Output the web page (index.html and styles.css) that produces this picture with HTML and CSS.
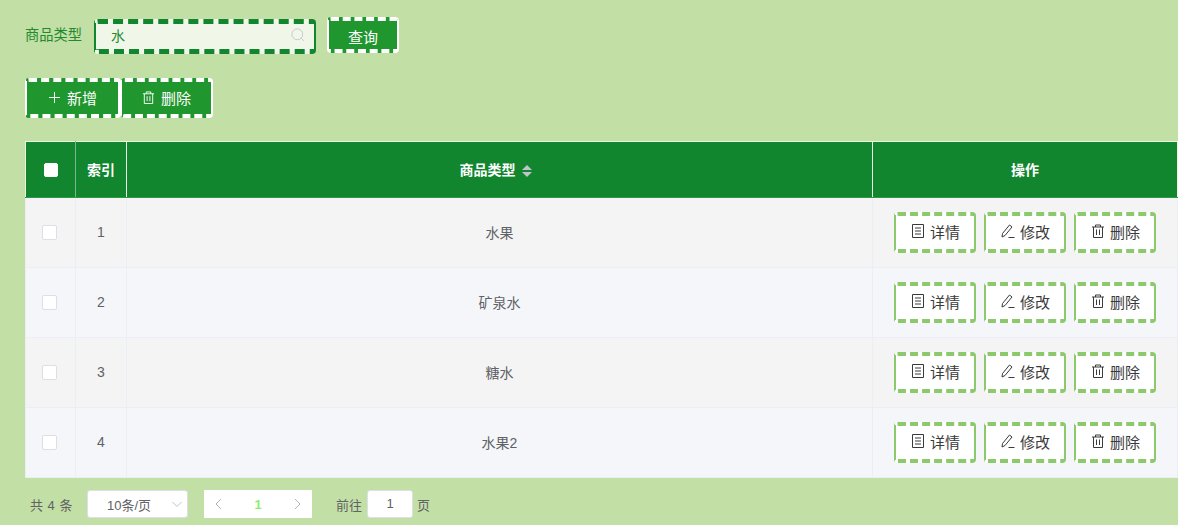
FILE: index.html
```html
<!DOCTYPE html>
<html lang="en">
<head>
    <meta charset="UTF-8">
    <title>商品类型</title>
    <link rel="stylesheet" href="styles.css">
</head>
<body>
    <div class="search-bar">
        <label class="search-label">商品类型</label>
        <div class="search-input">
            <span class="search-value">水</span>
            <svg class="search-icon" viewBox="0 0 16 16"><circle cx="7.200" cy="7.200" r="6.200"/><path d="M11.700 11.700l3 3"/></svg>
        </div>
        <button class="btn btn-query">查询</button>
    </div>
    <div class="tools">
        <button class="btn btn-tool btn-add">
            <svg class="icon" viewBox="0 0 14 14"><path d="M7 1v12M1 7h12"/></svg>新增
        </button>
        <button class="btn btn-tool btn-del">
            <svg class="icon" viewBox="0 0 14 14"><path d="M1 3h12M4.500 3V1h5v2M2.500 3v10.500h9V3M5.500 5.500v5.500M8.500 5.500v5.500"/></svg>删除
        </button>
    </div>
    <table class="grid">
        <thead>
            <tr>
                <th class="col-check"><span class="check check-head"></span></th>
                <th class="col-index">索引</th>
                <th>商品类型<span class="sort"><i class="up"></i><i class="down"></i></span></th>
                <th class="col-action">操作</th>
            </tr>
        </thead>
        <tbody>
            <tr>
                <td><span class="check"></span></td>
                <td>1</td>
                <td>水果</td>
                <td>
                    <div class="actions">
                        <button class="btn-row"><svg class="icon" viewBox="0 0 14 14"><path d="M1.500.5h11v13h-11zM4 4h6M4 7h6M4 10h6"/></svg>详情</button>
                        <button class="btn-row"><svg class="icon" viewBox="0 0 14 14"><path d="M1.500 9.500L8.500 1l2.500 2-7 8.500-3 1.500zM7.500 13.500h6"/></svg>修改</button>
                        <button class="btn-row"><svg class="icon" viewBox="0 0 14 14"><path d="M1 3h12M4.500 3V1h5v2M2.500 3v10.500h9V3M5.500 5.500v5.500M8.500 5.500v5.500"/></svg>删除</button>
                    </div>
                </td>
            </tr>
            <tr>
                <td><span class="check"></span></td>
                <td>2</td>
                <td>矿泉水</td>
                <td>
                    <div class="actions">
                        <button class="btn-row"><svg class="icon" viewBox="0 0 14 14"><path d="M1.500.5h11v13h-11zM4 4h6M4 7h6M4 10h6"/></svg>详情</button>
                        <button class="btn-row"><svg class="icon" viewBox="0 0 14 14"><path d="M1.500 9.500L8.500 1l2.500 2-7 8.500-3 1.500zM7.500 13.500h6"/></svg>修改</button>
                        <button class="btn-row"><svg class="icon" viewBox="0 0 14 14"><path d="M1 3h12M4.500 3V1h5v2M2.500 3v10.500h9V3M5.500 5.500v5.500M8.500 5.500v5.500"/></svg>删除</button>
                    </div>
                </td>
            </tr>
            <tr>
                <td><span class="check"></span></td>
                <td>3</td>
                <td>糖水</td>
                <td>
                    <div class="actions">
                        <button class="btn-row"><svg class="icon" viewBox="0 0 14 14"><path d="M1.500.5h11v13h-11zM4 4h6M4 7h6M4 10h6"/></svg>详情</button>
                        <button class="btn-row"><svg class="icon" viewBox="0 0 14 14"><path d="M1.500 9.500L8.500 1l2.500 2-7 8.500-3 1.500zM7.500 13.500h6"/></svg>修改</button>
                        <button class="btn-row"><svg class="icon" viewBox="0 0 14 14"><path d="M1 3h12M4.500 3V1h5v2M2.500 3v10.500h9V3M5.500 5.500v5.500M8.500 5.500v5.500"/></svg>删除</button>
                    </div>
                </td>
            </tr>
            <tr>
                <td><span class="check"></span></td>
                <td>4</td>
                <td>水果2</td>
                <td>
                    <div class="actions">
                        <button class="btn-row"><svg class="icon" viewBox="0 0 14 14"><path d="M1.500.5h11v13h-11zM4 4h6M4 7h6M4 10h6"/></svg>详情</button>
                        <button class="btn-row"><svg class="icon" viewBox="0 0 14 14"><path d="M1.500 9.500L8.500 1l2.500 2-7 8.500-3 1.500zM7.500 13.500h6"/></svg>修改</button>
                        <button class="btn-row"><svg class="icon" viewBox="0 0 14 14"><path d="M1 3h12M4.500 3V1h5v2M2.500 3v10.500h9V3M5.500 5.500v5.500M8.500 5.500v5.500"/></svg>删除</button>
                    </div>
                </td>
            </tr>
        </tbody>
    </table>
    <div class="pager">
        <span class="total">共 4 条</span>
        <div class="size-select">10条/页<svg class="chev" viewBox="0 0 12 12"><path d="M1.500 4l4.500 4.500L10.500 4"/></svg></div>
        <div class="pages">
            <svg class="arrow" viewBox="0 0 12 12"><path d="M8 1L3 6l5 5"/></svg>
            <span class="page-num">1</span>
            <svg class="arrow" viewBox="0 0 12 12"><path d="M4 1l5 5-5 5"/></svg>
        </div>
        <span class="goto">前往</span>
        <div class="page-input">1</div>
        <span class="goto-end">页</span>
    </div>
</body>
</html>
```

FILE: styles.css
```css
html, body {
    height: 100%;
}
body {
    margin: 0;
    padding: 17px 0 0 25px;
    box-sizing: border-box;
    background-color: #c2dfa5;
    font-family: "Liberation Sans", "Noto Sans CJK SC", sans-serif;
    font-size: 14px;
    color: #606266;
    overflow: hidden;
}
button {
    font-family: inherit;
    padding: 0;
    cursor: pointer;
}
svg path, svg circle {
    fill: none;
    stroke: currentColor;
}
.search-bar {
    display: flex;
    align-items: flex-start;
    height: 36px;
}
.search-label {
    color: #1f8a30;
    width: 69px;
    line-height: 37px;
    font-size: 14.250px;
}
/* top and bottom dashed, the sides solid */
.search-input, .btn, .btn-row {
    box-sizing: border-box;
    border-style: dashed solid;
    border-color: var(--edge);
    border-width: 4px 2px;
    border-radius: 4px;
    background-color: var(--fill);
}
.search-input {
    --edge: #11862f;
    --fill: #f0f7e9;
    width: 222px;
    height: 35px;
    margin-top: 2px;
    border-width: 5px 2px;
    display: flex;
    align-items: center;
    padding: 0 15px 3px;
    justify-content: space-between;
    color: #1f8a30;
}
.search-icon {
    width: 14px;
    height: 14px;
    color: #c0c4cc;
    margin-right: -6px;
}
.btn {
    --edge: #fff;
    --fill: #1f962e;
    color: #fff;
    font-size: 15px;
}
.btn-query {
    width: 72px;
    height: 36px;
    margin-left: 11px;
    padding-top: 2px;
}
.tools {
    display: flex;
    margin-top: 25px;
}
.btn-tool {
    height: 40px;
    display: flex;
    align-items: center;
    justify-content: center;
    padding-bottom: 2px;
}
.btn-add {
    width: 96px;
    border-right-width: 3px;
}
.btn-del {
    width: 92px;
    border-left-width: 1px;
}
.icon {
    width: 13px;
    height: 13px;
    margin-right: 6px;
}
.grid {
    width: 1153px;
    margin-top: 23px;
    border-collapse: collapse;
    table-layout: fixed;
    text-align: center;
}
.grid th {
    box-sizing: border-box;
    height: 56px;
    background-color: #11862f;
    color: #fff;
    font-size: 14px;
    font-weight: bold;
    padding: 0 0 2px;
    border: 1px solid #ecf5e4;
    border-bottom-color: #2a9a46;
}
.grid th.col-check {
    border-right-color: #7fb58a;
}
.grid td {
    box-sizing: border-box;
    height: 70px;
    padding: 0 0 2px;
    border: 1px solid #ebeef5;
    background-color: #f4f4f4;
}
.grid td:last-child {
    padding: 0;
}
.grid tbody tr:nth-child(even) td {
    background-color: #f5f6fa;
}
.col-check {
    width: 50px;
}
.col-index {
    width: 51px;
}
.col-action {
    width: 305px;
}
.check {
    display: inline-block;
    width: 13px;
    height: 13px;
    border: 1px solid #dcdfe6;
    border-radius: 2px;
    background-color: #fff;
    vertical-align: middle;
    margin: 2px 3px 0 0;
}
.check-head {
    width: 12px;
    height: 12px;
    border-color: #fff;
    margin: 0;
}
.sort {
    display: inline-flex;
    flex-direction: column;
    gap: 2px;
    margin: 0 8px 0 6px;
    vertical-align: middle;
}
.sort i {
    width: 0;
    height: 0;
    border-left: 5px solid transparent;
    border-right: 5px solid transparent;
}
.sort .up {
    border-bottom: 5px solid #c0c4cc;
}
.sort .down {
    border-top: 5px solid #c0c4cc;
}
.actions {
    display: flex;
    justify-content: center;
    gap: 8px;
}
.btn-row {
    --edge: #8bc96c;
    --fill: #fff;
    width: 82px;
    height: 41px;
    color: #3a3a3a;
    font-size: 15px;
    display: flex;
    align-items: center;
    justify-content: center;
    padding: 0 0 3px 1px;
}
.btn-row .icon {
    width: 14px;
    height: 14px;
    margin-right: 5px;
}
.pager {
    display: flex;
    align-items: center;
    height: 28px;
    margin-top: 12px;
    font-size: 13px;
    padding-left: 5px;
}
.total {
    width: 57px;
    word-spacing: 1px;
}
.size-select {
    width: 101px;
    height: 28px;
    box-sizing: border-box;
    border: 1px solid #dcdfe6;
    border-radius: 3px;
    background-color: #fff;
    display: flex;
    align-items: center;
    padding-left: 19px;
}
.chev {
    width: 12px;
    height: 12px;
    margin-left: auto;
    margin-right: 4px;
    color: #c0c4cc;
}
.pages {
    width: 108px;
    height: 28px;
    margin-left: 16px;
    background-color: #fff;
    display: flex;
    align-items: center;
    justify-content: space-between;
    padding: 0 9px;
    box-sizing: border-box;
}
.arrow {
    width: 12px;
    height: 12px;
    color: #b4b8c0;
}
.page-num {
    color: #90ee70;
    font-weight: bold;
}
.goto {
    margin-left: 24px;
    width: 31px;
}
.page-input {
    width: 46px;
    height: 28px;
    box-sizing: border-box;
    border: 1px solid #dcdfe6;
    border-radius: 3px;
    background-color: #fff;
    text-align: center;
    line-height: 26px;
}
.goto-end {
    margin-left: 4px;
}
```
